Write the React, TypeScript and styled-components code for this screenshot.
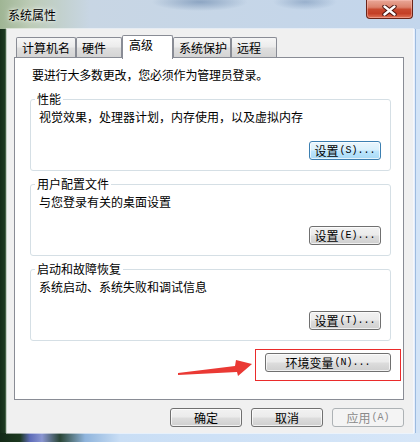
import React from "react";
import styled, { createGlobalStyle } from "styled-components";

const Global = createGlobalStyle`
  html, body { margin: 0; padding: 0; background: #ffffff; }
  body {
    font-family: "Noto Sans CJK SC", "Noto Sans", sans-serif;
    font-size: 12px;
    color: #000;
  }
  * { box-sizing: border-box; }
`;

const Window = styled.div`
  width: 420px;
  height: 442px;
  padding: 0 7px 9px 7px;
  display: flex;
  flex-direction: column;
  background:
    radial-gradient(ellipse 48px 9px at 200px 2px, rgba(70, 105, 150, 0.45), transparent),
    radial-gradient(ellipse 32px 8px at 305px 2px, rgba(70, 105, 150, 0.35), transparent),
    linear-gradient(to right, #142c18 0, #1e3a22 5px, #6c8a6c 6px, #8e9a92 7px) 0 29px / 7px 404px no-repeat,
    linear-gradient(to right, #e6eefa 0, #e6eefa 2px, #9dbbe0 2px, #9dbbe0 3px, #d3e4f7 3px) 100% 29px / 7px 404px no-repeat,
    linear-gradient(to right, #132a17 0, #1c3820 20px, #5e6cb8 30px, #8a96d2 42px, #2a4636 60px, #8fb4dc 85px, #c9def5 120px, #d6e6f8 100%) 0 433px / 100% 9px no-repeat,
    linear-gradient(to right, #9fb594 0, #bccbb6 30px, #c8d6e4 90px, #c3d6ec 100%);
`;

const TitleBar = styled.div`
  height: 29px;
  display: flex;
  justify-content: space-between;
  align-items: flex-start;
`;

const Title = styled.div`
  padding: 7px 0 0 1px;
  line-height: 16px;
  font-size: 12px;
  color: #000;
  text-shadow: 0 0 6px rgba(255, 255, 255, 0.95), 0 0 3px rgba(255, 255, 255, 0.9);
`;

const CloseButton = styled.div`
  width: 47px;
  height: 19px;
  border: 1px solid #6a2418;
  border-top: none;
  border-radius: 0 0 4px 4px;
  background: linear-gradient(#e9a898 0%, #dc826c 40%, #c84a30 52%, #c43f26 75%, #e07458 100%);
  box-shadow: inset 0 0 0 1px rgba(255, 200, 190, 0.45);
  display: flex;
  align-items: center;
  justify-content: center;
  padding-top: 2px;
`;

const Client = styled.div`
  height: 404px;
  background: #f0f0f0;
  padding: 6px 9px 0 7px;
  display: flex;
  flex-direction: column;
  box-shadow: 0 0 0 1px rgba(255, 255, 255, 0.55);
`;

const TabStrip = styled.div`
  height: 22px;
  padding-left: 2px;
  display: flex;
  align-items: flex-end;
  position: relative;
  z-index: 1;
`;

const Tab = styled.div<{ $w: number; $active?: boolean }>`
  width: ${(p) => p.$w}px;
  height: ${(p) => (p.$active ? 24 : 20)}px;
  margin-bottom: ${(p) => (p.$active ? -2 : 0)}px;
  border: 1px solid #898c95;
  border-bottom: none;
  border-radius: 2px 2px 0 0;
  padding: ${(p) => (p.$active ? "1px 0 0 6px" : "2px 0 0 5px")};
  line-height: 16px;
  white-space: nowrap;
  background: ${(p) =>
    p.$active ? "#ffffff" : "linear-gradient(#f6f6f6 0%, #ececec 45%, #dedede 55%, #d4d4d4 100%)"};
`;

const Panel = styled.div`
  height: 343px;
  border: 1px solid #898c95;
  background: #ffffff;
  padding: 9px 12px 0 15px;
  display: flex;
  flex-direction: column;
`;

const Intro = styled.div`
  line-height: 16px;
  padding-left: 2px;
  margin-bottom: 16px;
  letter-spacing: -0.2px;
`;

const GroupBox = styled.div`
  height: 72px;
  border: 1px solid #d5dfe5;
  border-radius: 3px;
  padding: 0 8px;
  display: flex;
  flex-direction: column;
  & + & {
    margin-top: 13px;
  }
`;

const Legend = styled.div`
  align-self: flex-start;
  margin: -9px 0 0 -4px;
  padding: 0 2px;
  background: #ffffff;
  line-height: 16px;
`;

const Desc = styled.div`
  margin-top: 2px;
  line-height: 16px;
`;

const Button = styled.div<{ $w?: number; $variant?: "default" | "disabled" | "normal" }>`
  width: ${(p) => p.$w ?? 72}px;
  height: 19px;
  border-radius: 3px;
  border: 1px solid
    ${(p) => (p.$variant === "default" ? "#3c7fb1" : p.$variant === "disabled" ? "#adb2b5" : "#707070")};
  background: ${(p) =>
    p.$variant === "default"
      ? "linear-gradient(#eaf6fd 0%, #d9f0fc 48%, #bee6fd 52%, #a7d9f5 100%)"
      : p.$variant === "disabled"
      ? "#f4f4f4"
      : "linear-gradient(#f2f2f2 0%, #ebebeb 48%, #dddddd 52%, #cfcfcf 100%)"};
  box-shadow: inset 0 0 0 1px rgba(255, 255, 255, ${(p) => (p.$variant === "disabled" ? 0 : 0.7)});
  color: ${(p) => (p.$variant === "disabled" ? "#8a8a8a" : "#000")};
  display: flex;
  align-items: center;
  justify-content: center;
  line-height: 17px;
  white-space: nowrap;
`;

const GroupButton = styled(Button)`
  align-self: flex-end;
  margin: 16px 1px 0 0;
`;

const Mn = styled.span`
  font-family: "Liberation Mono", "DejaVu Sans Mono", monospace;
  font-size: 10px;
  margin-left: 1px;
`;

const EnvRow = styled.div`
  margin-top: 12px;
  display: flex;
  justify-content: flex-end;
  position: relative;
`;

const Highlight = styled.div`
  position: absolute;
  right: -10px;
  top: -4px;
  width: 146px;
  height: 32px;
  border: 1px solid #ea2b2b;
  pointer-events: none;
`;

const Arrow = styled.svg`
  position: absolute;
  left: 146px;
  top: 2px;
`;

const Footer = styled.div`
  margin-top: 8px;
  display: flex;
  justify-content: flex-end;
  gap: 9px;
`;

const tabs: { label: string; w: number; active?: boolean }[] = [
  { label: "计算机名", w: 60 },
  { label: "硬件", w: 46 },
  { label: "高级", w: 51, active: true },
  { label: "系统保护", w: 58 },
  { label: "远程", w: 46 },
];

const groups = [
  { title: "性能", desc: "视觉效果，处理器计划，内存使用，以及虚拟内存", key: "(S)...", def: true },
  { title: "用户配置文件", desc: "与您登录有关的桌面设置", key: "(E)...", def: false },
  { title: "启动和故障恢复", desc: "系统启动、系统失败和调试信息", key: "(T)...", def: false },
];

export default function App() {
  return (
    <>
      <Global />
      <Window>
        <TitleBar>
          <Title>系统属性</Title>
          <CloseButton>
            <svg width="15" height="11" viewBox="0 0 15 11">
              <path d="M2.5 1.5 L12.5 9.5 M12.5 1.5 L2.5 9.5" stroke="#4a1410" strokeWidth="4.4" strokeLinecap="round" />
              <path d="M2.5 1.5 L12.5 9.5 M12.5 1.5 L2.5 9.5" stroke="#ffffff" strokeWidth="2.4" strokeLinecap="round" />
            </svg>
          </CloseButton>
        </TitleBar>
        <Client>
          <TabStrip>
            {tabs.map((t) => (
              <Tab key={t.label} $w={t.w} $active={t.active}>
                {t.label}
              </Tab>
            ))}
          </TabStrip>
          <Panel>
            <Intro>要进行大多数更改，您必须作为管理员登录。</Intro>
            {groups.map((g) => (
              <GroupBox key={g.title}>
                <Legend>{g.title}</Legend>
                <Desc>{g.desc}</Desc>
                <GroupButton $variant={g.def ? "default" : "normal"}>
                  设置<Mn>{g.key}</Mn>
                </GroupButton>
              </GroupBox>
            ))}
            <EnvRow>
              <Arrow width="80" height="24" viewBox="0 0 80 24">
                <polygon points="2,18 59,11 60,5 76,9 62,21 61,17 2,20" fill="#ea3934" />
              </Arrow>
              <Button $w={126}>
                环境变量<Mn>(N)...</Mn>
              </Button>
              <Highlight />
            </EnvRow>
          </Panel>
          <Footer>
            <Button>确定</Button>
            <Button>取消</Button>
            <Button $variant="disabled">
              应用<Mn>(A)</Mn>
            </Button>
          </Footer>
        </Client>
      </Window>
    </>
  );
}
